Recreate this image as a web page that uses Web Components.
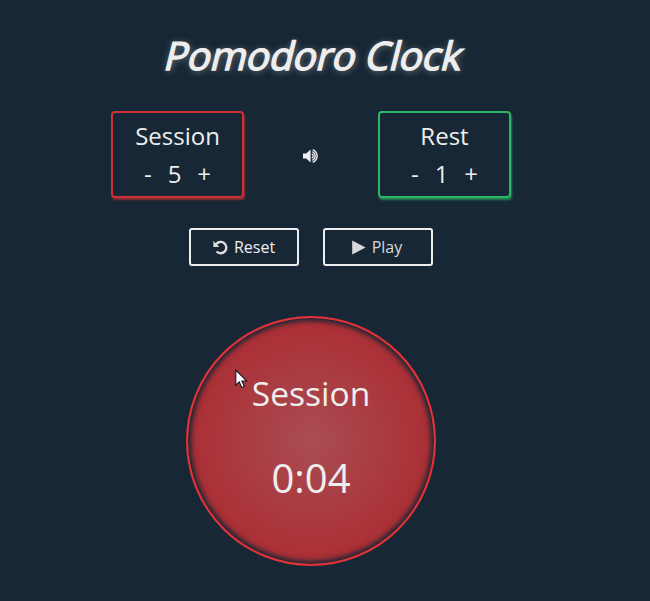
<!DOCTYPE html>
<html lang="en">
<head>
<meta charset="utf-8">
<title>Pomodoro Clock</title>
<style>
  html, body { margin: 0; height: 100%; background: #182735; overflow: hidden; }
</style>
</head>
<body>
<pomodoro-app></pomodoro-app>
<script>
const define = (name, markup) => {
  const template = document.createElement('template');
  template.innerHTML = markup;
  customElements.define(name, class extends HTMLElement {
    constructor() {
      super();
      this.attachShadow({ mode: 'open' }).append(template.content.cloneNode(true));
    }
  });
};

define('glow-title', `
  <style>
    :host { display: block; height: 55px; text-align: center; }
    h1 { margin: 0; display: inline-block; font-size: 39px; line-height: 52px; font-weight: 400; letter-spacing: -.25px; white-space: nowrap;
      transform: translateX(3px) skewX(-14deg); -webkit-text-stroke: 1.4px #eee; text-shadow: 1px 1px 7px rgba(238,238,238,.5); }
  </style>
  <h1><slot></slot></h1>`);

define('length-card', `
  <style>
    :host { display: flex; flex-direction: column; box-sizing: border-box; width: 133px; height: 87px;
      padding-top: 4px; border: 2px solid var(--accent); border-radius: 4px; box-shadow: 1px 2px 2px var(--shade);
      font-size: 24px; text-align: center; }
    .name { height: 38px; line-height: 38px; }
    .row { display: flex; justify-content: center; gap: 16px; height: 38px; line-height: 38px; }
  </style>
  <div class="name"><slot name="name"></slot></div>
  <div class="row"><span>-</span><slot></slot><span>+</span></div>`);

define('sound-icon', `
  <style>:host { display: block; width: 16px; height: 14px; margin-top: 2px; } svg { display: block; }</style>
  <svg width="16" height="14" viewBox="0 0 16 14">
    <path fill="#eee" d="M0 4.6h3.2L7.6.6v12.8L3.2 9.4H0z"/>
    <g fill="none" stroke="#eee" stroke-width="1.4" stroke-linecap="round">
      <path d="M9.3 5.2a2.2 2.2 0 0 1 0 3.6"/><path d="M9.8 2.9a4.7 4.7 0 0 1 0 8.2"/><path d="M10.3.8a7 7 0 0 1 0 12.4"/>
    </g>
  </svg>`);

define('outline-button', `
  <style>
    :host { display: flex; align-items: center; justify-content: center; gap: 6px; box-sizing: border-box;
      width: 110px; height: 38px; border: 2px solid #eee; border-radius: 3px; font-size: 16px; line-height: 22px; }
    ::slotted(svg) { display: block; }
  </style>
  <slot name="icon"></slot><span><slot></slot></span>`);

define('timer-dial', `
  <style>
    :host { display: flex; flex-direction: column; align-items: center; box-sizing: border-box; width: 250px; height: 250px;
      border: 2px solid #e03237; border-radius: 50%; padding-top: 51px;
      background: radial-gradient(circle closest-side, #a94d53, #aa2e34);
      box-shadow: inset 0 0 5px 3px #182735; }
    .phase { font-size: 33.6px; line-height: 48px; }
    .time { font-size: 40px; line-height: 54px; margin-top: 34px; }
  </style>
  <div class="phase"><slot name="phase"></slot></div>
  <div class="time"><slot></slot></div>`);

define('mouse-pointer', `
  <style>:host { position: absolute; left: 235px; top: 369px; } svg { display: block; }</style>
  <svg width="13" height="20" viewBox="0 0 13 20">
    <path d="M.8 1v15.2l3.5-3.3 2.5 5.7 2.6-1.1-2.5-5.5h4.9z" fill="#fff" stroke="#16142a" stroke-width="1.1"/>
  </svg>`);

define('pomodoro-app', `
  <style>
    :host { display: flex; flex-direction: column; align-items: center; width: 622px; height: 601px; box-sizing: border-box;
      padding-top: 29px; color: #eee; font-family: "Open Sans", "Noto Sans", sans-serif; }
    .settings { display: flex; justify-content: space-between; align-items: center; width: 400px; margin-top: 27px; }
    .session { --accent: #cf3034; --shade: rgba(207,48,52,.65); }
    .rest { --accent: #2bb865; --shade: rgba(43,184,101,.65); }
    .actions { display: flex; gap: 24px; margin-top: 30px; }
    .play { color: #d8d8d8; }
    timer-dial { margin-top: 50px; }
  </style>
  <glow-title>Pomodoro Clock</glow-title>
  <div class="settings">
    <length-card class="session"><span slot="name">Session</span><span>5</span></length-card>
    <sound-icon></sound-icon>
    <length-card class="rest"><span slot="name">Rest</span><span>1</span></length-card>
  </div>
  <div class="actions">
    <outline-button>
      <svg slot="icon" width="15" height="15" viewBox="0 0 15 15"><path d="M2.9 4.4A5.7 5.7 0 1 1 3.5 11.5" fill="none" stroke="#ddd" stroke-width="2.4"/><path d="M.4.9v6h6z" fill="#ddd"/></svg>
      Reset</outline-button>
    <outline-button class="play">
      <svg slot="icon" width="14" height="15" viewBox="0 0 14 15" style="margin-left:-2px"><path d="M.2.5v14l13.4-7z" fill="#d8dada"/></svg>
      Play</outline-button>
  </div>
  <timer-dial><span slot="phase">Session</span>0:04</timer-dial>
  <mouse-pointer></mouse-pointer>`);
</script>
</body>
</html>
